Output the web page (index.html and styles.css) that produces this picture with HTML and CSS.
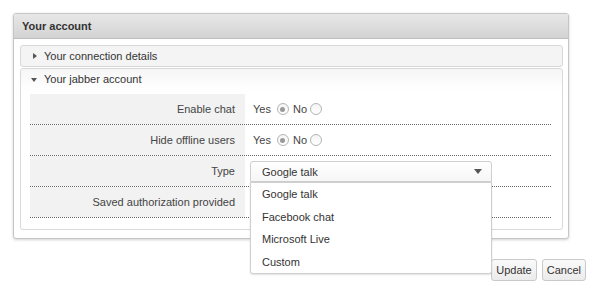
FILE: index.html
```html
<!DOCTYPE html>
<html>
<head>
<meta charset="utf-8">
<link rel="stylesheet" href="styles.css">
</head>
<body>
<div class="page">
  <div class="panel">
    <div class="panel-head">Your account</div>
    <div class="panel-body">
      <div class="section collapsed">
        <div class="section-title"><span class="tri-right"></span>Your connection details</div>
      </div>
      <div class="section open">
        <div class="section-title"><span class="tri-down"></span>Your jabber account</div>
        <div class="rows">
          <div class="row">
            <div class="label">Enable chat</div>
            <div class="value">
              <span class="opt">Yes</span><span class="radio checked"></span>
              <span class="opt">No</span><span class="radio"></span>
            </div>
          </div>
          <div class="row">
            <div class="label">Hide offline users</div>
            <div class="value">
              <span class="opt">Yes</span><span class="radio checked"></span>
              <span class="opt">No</span><span class="radio"></span>
            </div>
          </div>
          <div class="row">
            <div class="label">Type</div>
            <div class="value select-cell">
              <div class="select">
                <span class="select-text">Google talk</span>
                <span class="select-arrow"></span>
                <ul class="options">
                  <li>Google talk</li>
                  <li>Facebook chat</li>
                  <li>Microsoft Live</li>
                  <li>Custom</li>
                </ul>
              </div>
            </div>
          </div>
          <div class="row">
            <div class="label">Saved authorization provided</div>
            <div class="value"></div>
          </div>
        </div>
      </div>
    </div>
  </div>
  <div class="actions">
    <button class="btn">Update</button>
    <button class="btn">Cancel</button>
  </div>
</div>
</body>
</html>
```

FILE: styles.css
```css
* { box-sizing: border-box; }
html, body { margin: 0; padding: 0; background: #fff; }
body {
  font-family: "Liberation Sans", Arial, sans-serif;
  font-size: 11px;
  color: #333;
}
.page { padding: 13px 0 0 13px; width: 589px; }
.panel {
  width: 556px;
  border: 1px solid #c6c6c6;
  border-radius: 3px;
  box-shadow: 0 1px 3px rgba(0,0,0,0.18);
  background: #fff;
  position: relative;
}
.panel-head {
  height: 25px;
  line-height: 24px;
  padding-left: 8px;
  font-weight: bold;
  color: #333;
  background: linear-gradient(#e7e7e7, #d3d3d3);
  border-bottom: 1px solid #bdbdbd;
  border-radius: 2px 2px 0 0;
}
.panel-body { padding: 6px 5px 8px 6px; }
.section {
  border: 1px solid #d9d9d9;
  border-radius: 3px;
}
.section.collapsed { background: #f4f4f4; }
.section.open {
  margin-top: 1px;
  background: linear-gradient(#f6f6f6, #fff 22px);
  padding-bottom: 11px;
}
.section-title {
  height: 20px;
  line-height: 20px;
  display: flex;
  align-items: center;
}
.section.open .section-title { height: 21px; line-height: 21px; }
.tri-right {
  width: 0; height: 0;
  border-top: 3.5px solid transparent;
  border-bottom: 3.5px solid transparent;
  border-left: 4px solid #555;
  margin: 0 7px 0 12px;
}
.tri-down {
  width: 0; height: 0;
  border-left: 3.5px solid transparent;
  border-right: 3.5px solid transparent;
  border-top: 4px solid #555;
  margin: 0 7px 0 10px;
}
.rows { padding: 4px 11px 0 9px; }
.row {
  display: flex;
  height: 31px;
  border-bottom: 1px dotted #666;
}
.label {
  width: 215px;
  background: #f2f2f2;
  text-align: right;
  padding-right: 10px;
  line-height: 30px;
  color: #444;
}
.value {
  flex: 1;
  display: flex;
  align-items: center;
  padding-left: 8px;
  color: #444;
}
.opt { margin-right: 6px; }
.radio {
  width: 12px; height: 12px;
  border-radius: 50%;
  border: 1px solid #b4b4b4;
  background: linear-gradient(#f4f4f4, #fff);
  margin-right: 4px;
  position: relative;
}
.radio.checked::after {
  content: "";
  position: absolute;
  left: 2.5px; top: 2.5px;
  width: 5px; height: 5px;
  border-radius: 50%;
  background: #9a9a9a;
}
.value .radio:last-child { margin-left: -3px; }
.select-cell { padding-left: 5px; }
.select {
  position: relative;
  width: 242px;
  height: 21px;
  margin-top: 1px;
  border: 1px solid #cfcfcf;
  border-radius: 3px 3px 0 0;
  background: linear-gradient(#fff, #f6f6f6);
  display: flex;
  align-items: center;
  padding-left: 11px;
  color: #333;
}
.select-text { flex: 1; }
.select-arrow {
  width: 0; height: 0;
  border-left: 4px solid transparent;
  border-right: 4px solid transparent;
  border-top: 5px solid #555;
  margin-right: 9px;
}
.options {
  position: absolute;
  z-index: 10;
  left: -1px;
  top: 20px;
  width: 242px;
  margin: 0;
  padding: 0;
  list-style: none;
  background: #fff;
  border: 1px solid #cfcfcf;
  border-radius: 0 0 3px 3px;
  box-shadow: 0 1px 2px rgba(0,0,0,0.12);
}
.options li {
  height: 22.5px;
  line-height: 22.5px;
  padding-left: 11px;
  color: #333;
}
.actions {
  display: flex;
  justify-content: flex-end;
  gap: 5px;
  margin-top: 20px;
  padding-right: 3px;
}
.btn {
  font-family: "Liberation Sans", Arial, sans-serif;
  font-size: 11px;
  color: #333;
  height: 22px;
  padding: 0 4px;
  border: 1px solid #c9c9c9;
  border-radius: 3px;
  background: linear-gradient(#fafafa, #ebebeb);
}
```
